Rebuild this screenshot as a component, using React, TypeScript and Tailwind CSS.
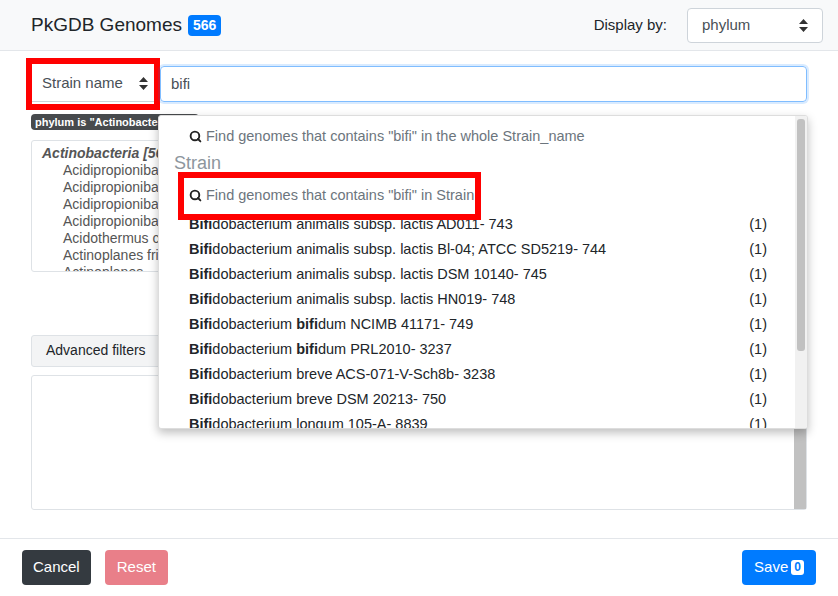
import { Search } from "lucide-react";

const ITEMS: [string, string, string][] = [
  ["dobacterium animalis subsp. lactis AD011- 743", "", ""],
  ["dobacterium animalis subsp. lactis Bl-04; ATCC SD5219- 744", "", ""],
  ["dobacterium animalis subsp. lactis DSM 10140- 745", "", ""],
  ["dobacterium animalis subsp. lactis HN019- 748", "", ""],
  ["dobacterium ", "bifi", "dum NCIMB 41171- 749"],
  ["dobacterium ", "bifi", "dum PRL2010- 3237"],
  ["dobacterium breve ACS-071-V-Sch8b- 3238", "", ""],
  ["dobacterium breve DSM 20213- 750", "", ""],
  ["dobacterium longum 105-A- 8839", "", ""],
];

const TREE = [
  "Acidipropionibacterium",
  "Acidipropionibacterium",
  "Acidipropionibacterium",
  "Acidipropionibacterium",
  "Acidothermus cellulolyticus",
  "Actinoplanes friuliensis",
  "Actinoplanes",
];

export default function App() {
  return (
    <div
      className="relative h-[596px] w-[838px] overflow-hidden bg-white text-[15px] text-[#212529]"
      style={{ fontFamily: '"Liberation Sans", Arial, sans-serif' }}
    >
      {/* header */}
      <div className="flex h-[51px] items-center justify-between border-b border-[#e3e6ea] bg-[#f8f9fa] pl-[31px] pr-[15px]">
        <div className="flex items-center gap-[6px] text-[19px]">
          PkGDB Genomes
          <span className="rounded-[4px] bg-[#007bff] px-[5px] py-[2px] text-[14px] font-bold leading-[17px] text-white">566</span>
        </div>
        <div className="flex items-center gap-[20px]">
          <span>Display by:</span>
          <div className="flex h-[35px] w-[136px] items-center justify-between rounded-[4px] border border-[#ced4da] bg-white px-[14px] text-[#495057]">
            phylum
            <Arrows />
          </div>
        </div>
      </div>

      {/* body */}
      <div className="px-[31px] pt-[7px]">
        <div className="flex items-center">
          <div className="-ml-[5px] flex h-[52px] items-center border-[6px] border-[#ff0000] bg-white">
            <div className="flex h-[36px] w-[122px] items-center justify-between border-b border-[#ced4da] pl-[10px] pr-[6px] text-[#495057]">
              Strain name
              <Arrows />
            </div>
          </div>
          <div className="flex h-[36px] flex-1 items-center rounded-[4px] border border-[#80bdff] pl-[10px] text-[#495057] shadow-[0_0_0_2px_rgba(0,123,255,0.15)]">
            bifi
          </div>
        </div>
        <div className="mt-[3px] inline-block rounded-[4px] bg-[#474a4d] px-[4px] text-[11px] font-bold leading-[16px] text-white">
          phylum is "Actinobacteria"&nbsp;&nbsp;&nbsp;&nbsp;&nbsp;&nbsp;
        </div>
        <div className="mt-[7px] h-[132px] w-[300px] overflow-hidden rounded-[3px] border border-[#dee2e6] px-[10px] pt-[4px] text-[14px] leading-[17px] text-[#555]">
          <div className="font-bold italic text-[#555]">Actinobacteria [566]</div>
          {TREE.map((t, i) => (
            <div key={i} className="pl-[21px]">{t}</div>
          ))}
        </div>
        <div className="mt-[63px] flex h-[32px] w-[140px] items-center rounded-[3px] border border-[#dee2e6] bg-[#f3f4f5] pl-[14px] text-[14px]">
          Advanced filters
        </div>
        <div className="mt-[8px] flex h-[135px] w-[776px] justify-end rounded-[3px] border border-[#dee2e6]">
          <div className="w-[12px] bg-[#c1c1c1]" />
        </div>
      </div>

      {/* footer */}
      <div className="absolute bottom-0 left-0 right-0 flex h-[58px] items-center justify-between border-t border-[#e3e6ea] px-[22px]">
        <div className="flex gap-[14px]">
          <button className="h-[35px] rounded-[4px] bg-[#343a40] px-[11px] text-white">Cancel</button>
          <button className="h-[35px] rounded-[4px] bg-[#e97f89] px-[12px] text-white">Reset</button>
        </div>
        <button className="flex h-[35px] items-center gap-[3px] rounded-[4px] bg-[#007bff] px-[12px] text-white">
          Save
          <span className="rounded-[3px] bg-white px-[3px] text-[12px] font-bold leading-[15px] text-[#007bff]">0</span>
        </button>
      </div>

      {/* autocomplete dropdown */}
      <div className="absolute left-[158px] top-[115px] flex h-[314px] w-[650px] overflow-hidden rounded-[3px] border border-[#ddd] bg-white shadow-[0_4px_10px_rgba(0,0,0,0.25)]">
        <div className="flex-1 pt-[10px] text-[14.5px]">
          <div className="flex items-center gap-[4px] pl-[30px] text-[#6c757d]">
            <Search size={13} strokeWidth={3.5} className="text-[#222]" />
            Find genomes that contains "bifi" in the whole Strain_name
          </div>
          <div className="mt-[2px] pl-[15px] text-[18px] text-[#8d969d]">Strain</div>
          <div className="relative z-10 ml-[19px] mt-[-5px] flex h-[48px] w-[303px] items-center gap-[4px] border-[6px] border-[#ff0000] pl-[5px] text-[#6c757d]">
            <Search size={13} strokeWidth={3.5} className="text-[#222]" />
            Find genomes that contains "bifi" in Strain
          </div>
          {ITEMS.map(([a, b, c], i) => (
            <div key={i} className={`flex h-[25px] items-center justify-between pl-[30px] pr-[28px] ${i === 0 ? "-mt-[7px]" : ""}`}>
              <span>
                <b>Bifi</b>{a}<b>{b}</b>{c}
              </span>
              <span>(1)</span>
            </div>
          ))}
        </div>
        <div className="w-[12px] bg-[#f1f1f1] px-[2px] pt-[3px]">
          <div className="h-[232px] rounded-[3px] bg-[#c1c1c1]" />
        </div>
      </div>
    </div>
  );
}

function Arrows() {
  return (
    <svg width="9" height="13" viewBox="0 0 9 13" className="text-[#333]">
      <path d="M4.5 0 L9 5 H0 Z M4.5 13 L9 8 H0 Z" fill="currentColor" />
    </svg>
  );
}
